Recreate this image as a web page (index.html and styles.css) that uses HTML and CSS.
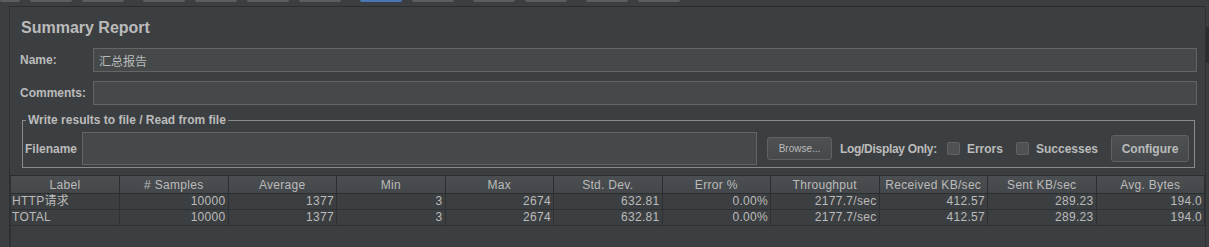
FILE: index.html
```html
<!DOCTYPE html>
<html lang="en">
<head>
    <meta charset="UTF-8">
    <title>Summary Report</title>
    <link rel="stylesheet" href="styles.css">
</head>
<body>

<div class="tabs">
    <div class="stub first"></div>
    <div class="stub"></div>
    <div class="stub"></div>
    <div class="stub wide"></div>
    <div class="stub"></div>
    <div class="stub"></div>
    <div class="stub"></div>
    <div class="stub wide active"></div>
    <div class="stub"></div>
    <div class="stub wide"></div>
    <div class="stub"></div>
    <div class="stub wide"></div>
    <div class="stub"></div>
</div>

<div class="frame">
    <div class="gutter"></div>

    <div class="panel">
        <div class="form">
            <div class="title">Summary Report</div>

            <div class="row first-row">
                <label>Name:</label>
                <div class="field cjk">汇总报告</div>
            </div>
            <div class="row">
                <label>Comments:</label>
                <div class="field"></div>
            </div>

            <fieldset>
                <legend>Write results to file / Read from file</legend>
                <div class="file-row">
                    <label class="file-label">Filename</label>
                    <div class="field file-input"></div>
                    <button class="browse">Browse...</button>
                    <span class="log-label">Log/Display Only:</span>
                    <span class="check"></span>
                    <span class="check-text">Errors</span>
                    <span class="check second"></span>
                    <span class="check-text">Successes</span>
                    <button class="configure">Configure</button>
                </div>
            </fieldset>
        </div>

        <div class="results">
            <table>
                <thead>
                    <tr>
                        <th>Label</th>
                        <th># Samples</th>
                        <th>Average</th>
                        <th>Min</th>
                        <th>Max</th>
                        <th>Std. Dev.</th>
                        <th>Error %</th>
                        <th>Throughput</th>
                        <th>Received KB/sec</th>
                        <th>Sent KB/sec</th>
                        <th>Avg. Bytes</th>
                    </tr>
                </thead>
                <tbody>
                    <tr>
                        <td class="name">HTTP请求</td>
                        <td>10000</td>
                        <td>1377</td>
                        <td>3</td>
                        <td>2674</td>
                        <td>632.81</td>
                        <td>0.00%</td>
                        <td>2177.7/sec</td>
                        <td>412.57</td>
                        <td>289.23</td>
                        <td>194.0</td>
                    </tr>
                    <tr>
                        <td class="name">TOTAL</td>
                        <td>10000</td>
                        <td>1377</td>
                        <td>3</td>
                        <td>2674</td>
                        <td>632.81</td>
                        <td>0.00%</td>
                        <td>2177.7/sec</td>
                        <td>412.57</td>
                        <td>289.23</td>
                        <td>194.0</td>
                    </tr>
                </tbody>
            </table>
        </div>
    </div>

    <div class="rail">
        <div class="rail-thumb"></div>
    </div>
</div>

</body>
</html>
```

FILE: styles.css
```css
body {
    margin: 0;
    width: 1209px;
    height: 247px;
    overflow: hidden;
    background-color: #3c3f41;
    color: #bbbbbb;
    font-family: "Liberation Sans", Arial, "Noto Sans CJK SC", sans-serif;
    font-size: 12px;
}

/* tab strip remnants at the very top */
.tabs {
    height: 6px;
    display: flex;
    align-items: flex-start;
}

.stub {
    width: 42px;
    height: 2px;
    margin-left: 10px;
    background-color: #5a5e61;
    border-radius: 0 0 2px 2px;
}

.stub.first {
    width: 20px;
    margin-left: 0;
}

.stub.wide {
    margin-left: 19px;
}

.stub.active {
    background-color: #4a76b3;
}

.frame {
    display: flex;
    height: 241px;
}

.gutter {
    width: 9px;
}

.panel {
    flex: 1;
    display: flex;
    flex-direction: column;
    border-left: 1px solid #2e3032;
    border-top: 1px solid #2b2d2f;
}

.rail {
    width: 3px;
    border-left: 1px solid #2e3032;
}

.rail-thumb {
    margin-top: 21px;
    height: 36px;
    background-color: #2b2d2f;
}

/* form area */
.form {
    padding: 10px 8px 0 10px;
}

.title {
    margin: 1px 0 0 1px;
    font-size: 16px;
    font-weight: bold;
    line-height: 20px;
}

.row {
    display: flex;
    align-items: center;
    height: 24px;
    margin-top: 9px;
}

.row.first-row {
    margin-top: 10px;
}

.row label {
    width: 73px;
    font-weight: bold;
}

.field {
    flex: 1;
    height: 24px;
    box-sizing: border-box;
    display: flex;
    align-items: center;
    padding: 0 5px;
    background-color: #45494a;
    border: 1px solid #646464;
}

.cjk {
    font-size: 12px;
    padding-top: 1px;
}

fieldset {
    margin: 8px 2px 0 2px;
    padding: 5px 5px 2px 2px;
    min-width: 0;
    border: 1px solid #8a8a8a;
}

legend {
    margin-left: 1px;
    padding: 0 2px;
    font-weight: bold;
    line-height: 14px;
}

.file-row {
    display: flex;
    align-items: center;
    height: 33px;
}

.file-label {
    width: 57px;
    font-weight: bold;
}

.file-input {
    flex: none;
    width: 675px;
    height: 33px;
}

button {
    box-sizing: border-box;
    color: #bbbbbb;
    font-family: "Liberation Sans", Arial, sans-serif;
    background: linear-gradient(#4d5153, #45494b);
    border: 1px solid #5e6264;
    border-radius: 3px;
    padding: 0;
}

.browse {
    width: 65px;
    height: 23px;
    margin-left: 10px;
    font-size: 10px;
}

.log-label {
    margin-left: 8px;
    font-weight: bold;
    letter-spacing: -0.3px;
}

.check {
    width: 13px;
    height: 13px;
    box-sizing: border-box;
    margin-left: 10px;
    background-color: #4e5254;
    border: 1px solid #5f6365;
    border-radius: 2px;
}

.check.second {
    margin-left: 13px;
}

.check-text {
    margin-left: 7px;
    font-weight: bold;
}

.configure {
    width: 78px;
    height: 27px;
    margin-left: auto;
    font-size: 12px;
    font-weight: bold;
}

/* results table */
.results {
    flex: 1;
    margin-top: 7px;
    border-top: 1px solid #2b2d2f;
    border-left: 1px solid #2e3032;
}

table {
    width: 100%;
    table-layout: fixed;
    border-collapse: collapse;
    letter-spacing: 0.3px;
}

th {
    height: 17px;
    padding: 0;
    font-weight: normal;
    line-height: 16px;
    background: linear-gradient(#4b4f52, #43474a);
    border-right: 1px solid #2b2d2f;
    border-bottom: 1px solid #2b2d2f;
    text-align: center;
}

td {
    height: 15px;
    padding: 0 2px 0 0;
    line-height: 15px;
    text-align: right;
    border-right: 1px solid #2e3033;
    border-bottom: 1px solid #2e3033;
    white-space: nowrap;
}

td.name {
    padding: 0 0 0 1px;
    text-align: left;
}
```
